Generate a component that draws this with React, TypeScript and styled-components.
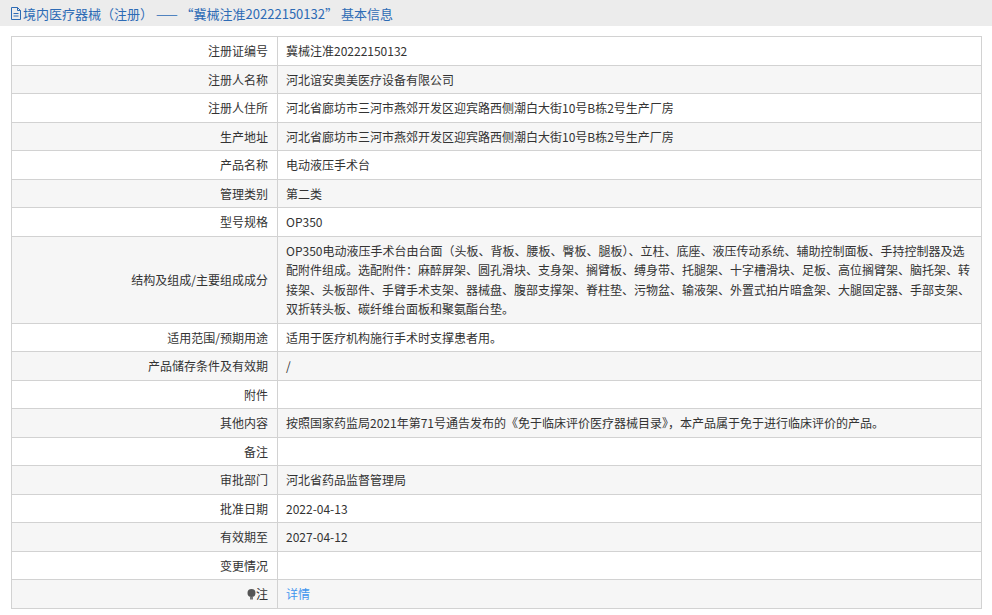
import styled, { createGlobalStyle } from "styled-components";

const Global = createGlobalStyle`
  body {
    margin: 0;
    background: #fff;
    font-family: "Noto Sans CJK SC", "Noto Sans", sans-serif;
    font-size: 12px;
    color: #333;
  }
`;

const TitleBar = styled.div`
  height: 26px;
  background: #ececec;
  display: flex;
  align-items: center;
  padding-left: 10px;
  font-size: 13px;
  color: #2d6bb5;
  gap: 1px;
`;

const Table = styled.table`
  margin: 10px 0 0 11px;
  width: 971px;
  border-collapse: collapse;
  border: 1px solid #d2d2d2;
`;

const Row = styled.tr<{ $even: boolean }>`
  background: ${(p) => (p.$even ? "#f6f6f6" : "#fff")};
`;

const Label = styled.td`
  width: 247px;
  text-align: right;
  padding: 4px 9px;
  line-height: 19.5px;
  border: 1px solid #d2d2d2;
  border-left: none;
`;

const Value = styled.td`
  padding: 4px 8px;
  line-height: 19.5px;
  border: 1px solid #d2d2d2;
  height: 19.5px;
`;

const Link = styled.span`
  color: #3f95ee;
`;

const rows: [string, string][] = [
  ["注册证编号", "冀械注准20222150132"],
  ["注册人名称", "河北谊安奥美医疗设备有限公司"],
  ["注册人住所", "河北省廊坊市三河市燕郊开发区迎宾路西侧潮白大街10号B栋2号生产厂房"],
  ["生产地址", "河北省廊坊市三河市燕郊开发区迎宾路西侧潮白大街10号B栋2号生产厂房"],
  ["产品名称", "电动液压手术台"],
  ["管理类别", "第二类"],
  ["型号规格", "OP350"],
  [
    "结构及组成/主要组成成分",
    "OP350电动液压手术台由台面（头板、背板、腰板、臀板、腿板）、立柱、底座、液压传动系统、辅助控制面板、手持控制器及选配附件组成。选配附件：麻醉屏架、圆孔滑块、支身架、搁臂板、缚身带、托腿架、十字槽滑块、足板、高位搁臂架、脑托架、转接架、头板部件、手臂手术支架、器械盘、腹部支撑架、脊柱垫、污物盆、输液架、外置式拍片暗盒架、大腿固定器、手部支架、双折转头板、碳纤维台面板和聚氨酯台垫。",
  ],
  ["适用范围/预期用途", "适用于医疗机构施行手术时支撑患者用。"],
  ["产品储存条件及有效期", "/"],
  ["附件", ""],
  ["其他内容", "按照国家药监局2021年第71号通告发布的《免于临床评价医疗器械目录》，本产品属于免于进行临床评价的产品。"],
  ["备注", ""],
  ["审批部门", "河北省药品监督管理局"],
  ["批准日期", "2022-04-13"],
  ["有效期至", "2027-04-12"],
  ["变更情况", ""],
];

export default function App() {
  return (
    <>
      <Global />
      <TitleBar>
        <svg width="12" height="13" viewBox="0 0 12 13" fill="none" stroke="#2d6bb5" strokeWidth="1">
          <path d="M1.5 0.5h6l3 3v9h-9z M7.5 0.5v3h3 M3.5 6.5h5 M3.5 9h5" />
        </svg>
        <span>境内医疗器械（注册） —— “冀械注准20222150132” 基本信息</span>
      </TitleBar>
      <Table>
        <tbody>
          {rows.map(([k, v], i) => (
            <Row key={k} $even={i % 2 === 1}>
              <Label>{k}</Label>
              <Value>{v}</Value>
            </Row>
          ))}
          <Row $even={true}>
            <Label>
              <svg width="9" height="11" viewBox="0 0 9 11" style={{ verticalAlign: "-1px" }}>
                <circle cx="4.5" cy="4" r="4" fill="#555" />
                <rect x="3" y="8" width="3" height="2.5" fill="#777" />
              </svg>
              注
            </Label>
            <Value>
              <Link>详情</Link>
            </Value>
          </Row>
        </tbody>
      </Table>
    </>
  );
}
